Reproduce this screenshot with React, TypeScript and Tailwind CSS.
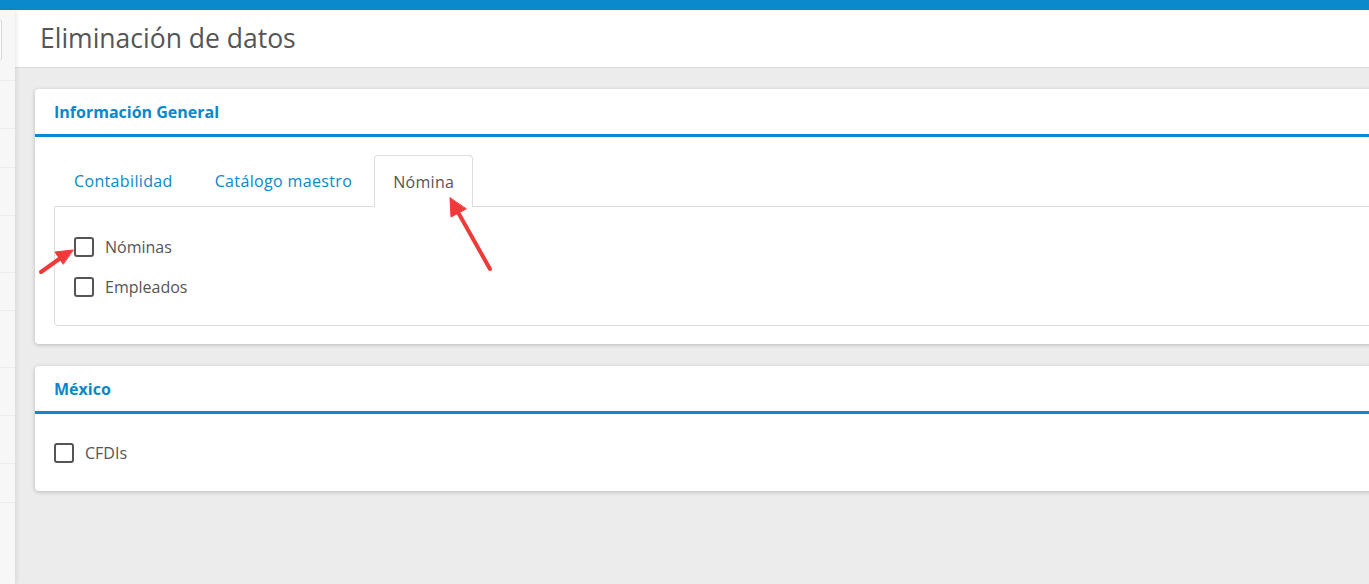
import { useState } from 'react'

const font = { fontFamily: '"Open Sans", "Noto Sans", sans-serif' }

function Checkbox({ label, defaultChecked = false }: { label: string; defaultChecked?: boolean }) {
  const [checked, setChecked] = useState(defaultChecked)
  return (
    <label className="flex h-5 cursor-pointer items-center gap-[11px]">
      <span
        onClick={() => setChecked(!checked)}
        className="flex size-5 items-center justify-center rounded-[3px] border-2 border-[#555] bg-white"
      >
        {checked ? <span className="size-2 rounded-[1px] bg-[#555]" /> : null}
      </span>
      <span className="text-[16px] text-[#555]">{label}</span>
    </label>
  )
}

function Card({ title, children }: { title: string; children: React.ReactNode }) {
  return (
    <div className="rounded-[4px] bg-white shadow-[0_1px_4px_rgba(0,0,0,0.22)]">
      <div className="flex h-[48px] items-center border-b-[3px] border-[#0a8acd] px-[19px]">
        <h2 className="text-[16px] font-bold text-[#0a87c9]">{title}</h2>
      </div>
      {children}
    </div>
  )
}

const tabs = ['Contabilidad', 'Catálogo maestro', 'Nómina']

function Arrows() {
  return (
    <svg className="pointer-events-none absolute left-0 top-0" width="1369" height="584">
      <g fill="#ef3a3a" stroke="#ef3a3a" strokeLinecap="round">
        <line x1="41" y1="272" x2="62" y2="257" strokeWidth="4" />
        <polygon points="73,250 55,252 63,264" strokeWidth="1" />
        <line x1="490" y1="269" x2="459" y2="214" strokeWidth="4" />
        <polygon points="450,198 451,217 466,209" strokeWidth="1" />
      </g>
    </svg>
  )
}

export default function App() {
  const [active, setActive] = useState(2)

  return (
    <div className="relative h-[584px] w-[1369px] overflow-hidden bg-[#ececec]" style={font}>
      <div className="h-[10px] bg-[#0a8acd]" />
      <div className="flex h-[574px]">
        <aside className="relative z-10 w-[15px] shrink-0 bg-[#f7f7f7] shadow-[2px_0_4px_rgba(0,0,0,0.08)]">
          <div className="mt-[10px] h-[40px] w-[2px] rounded-r-[3px] border border-l-0 border-[#d6d6d6] bg-white" />
          <div className="mt-[20px] flex flex-col">
            {[0, 48, 39, 48, 57, 38, 57, 48, 48, 39].map((h, i) => (
              <div key={i} style={{ height: h }} className="border-b border-[#ececec]" />
            ))}
          </div>
        </aside>

        <main className="flex w-[1400px] shrink-0 flex-col">
          <header className="flex h-[58px] items-center border-b border-[#d9d9d9] bg-white pl-[25px]">
            <h1 className="text-[26.5px] text-[#555]">Eliminación de datos</h1>
          </header>

          <div className="flex flex-col gap-[22px] pl-5 pt-[21px]">
            <Card title="Información General">
              <div className="px-[19px] pb-[18px] pt-[18px]">
                <div className="flex">
                  {tabs.map((t, i) => (
                    <button
                      key={t}
                      onClick={() => setActive(i)}
                      className={
                        i === active
                          ? 'relative -mb-px mr-[2px] flex h-[52px] items-center rounded-t-[4px] border border-b-0 border-[#ddd] bg-white px-[18px] text-[16px] tracking-[0.3px] text-[#555]'
                          : 'mr-[2px] flex h-[51px] items-center border border-b-0 border-transparent px-[19px] text-[16px] tracking-[0.35px] text-[#0a87c9]'
                      }
                    >
                      {t}
                    </button>
                  ))}
                </div>
                <div className="flex flex-col gap-5 rounded-b-[4px] border border-[#ddd] px-[19px] pb-[28px] pt-[30px]">
                  {active === 2 ? (
                    <>
                      <Checkbox label="Nóminas" />
                      <Checkbox label="Empleados" />
                    </>
                  ) : (
                    <Checkbox label={tabs[active]} />
                  )}
                </div>
              </div>
            </Card>

            <Card title="México">
              <div className="px-[19px] pb-[28px] pt-[29px]">
                <Checkbox label="CFDIs" />
              </div>
            </Card>
          </div>
        </main>
      </div>
      <Arrows />
    </div>
  )
}
